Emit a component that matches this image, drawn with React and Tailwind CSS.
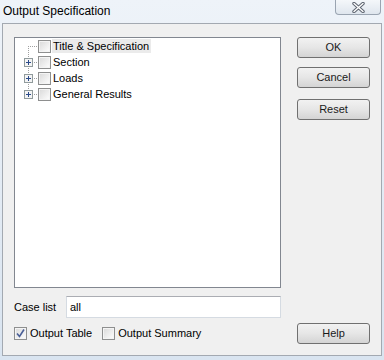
import React from 'react'

const font = { fontFamily: '"Liberation Sans", Arial, sans-serif' }

const Box = ({ checked }) => (
  <span className="flex h-[13px] w-[13px] shrink-0 items-center justify-center border border-[#8e8f8f] bg-white">
    <span className="flex h-[11px] w-[11px] items-center justify-center border border-[#f4f4f4] bg-gradient-to-br from-[#dcdcdc] to-[#fbfbfb]">
      {checked && (
        <svg width="9" height="9" viewBox="0 0 9 9">
          <path d="M1 4.5 L3.5 7.5 L8 0.5" fill="none" stroke="#4a5f97" strokeWidth="1.6" />
        </svg>
      )}
    </span>
  </span>
)

// tree connector: vertical dotted line, horizontal stub, optional plus box
const Connector = ({ top, bottom, plus }) => (
  <svg width="23" height="16" viewBox="0 0 23 16" className="shrink-0">
    {top && <line x1="13.5" y1="0" x2="13.5" y2="8" stroke="#a0a0a0" strokeDasharray="1 1" />}
    {bottom && <line x1="13.5" y1="8" x2="13.5" y2="16" stroke="#a0a0a0" strokeDasharray="1 1" />}
    <line x1="13" y1="8.5" x2="23" y2="8.5" stroke="#a0a0a0" strokeDasharray="1 1" />
    {plus && (
      <g>
        <rect x="9.5" y="4.5" width="8" height="8" fill="#f4f4f4" stroke="#919b9c" />
        <line x1="11" y1="8.5" x2="16" y2="8.5" stroke="#2b4b8a" />
        <line x1="13.5" y1="6" x2="13.5" y2="11" stroke="#2b4b8a" />
      </g>
    )}
  </svg>
)

const rows = [
  { label: 'Title & Specification', top: false, bottom: true, plus: false, sel: true },
  { label: 'Section', top: true, bottom: true, plus: true },
  { label: 'Loads', top: true, bottom: true, plus: true },
  { label: 'General Results', top: true, bottom: false, plus: true },
]

const Button = ({ children }) => (
  <button className="flex h-[21px] w-[73px] items-center justify-center rounded-[3px] border border-[#707070] bg-gradient-to-b from-[#f2f2f2] via-[#e6e6e6] to-[#d4d4d4] text-[11px] text-[#1a1a1a]">
    {children}
  </button>
)

export default function App() {
  return (
    <div className="flex h-[360px] w-[384px] flex-col bg-gradient-to-b from-[#eef3f9] to-[#d9e4f0]" style={font}>
      <div className="flex h-[23px] shrink-0 items-start justify-between">
        <span className="pl-[3px] pt-[2px] text-[12px] text-black">Output Specification</span>
        <span className="mr-[3px] flex h-[15px] w-[46px] items-center justify-center rounded-b-[4px] border border-t-0 border-[#9aa4b1] bg-gradient-to-b from-[#f4f7fa] to-[#dfe6ee]">
          <svg width="13" height="11" viewBox="0 0 13 11">
            <path d="M2 1.5 L11 9.5 M11 1.5 L2 9.5" stroke="#5d6470" strokeWidth="3.4" strokeLinecap="round" />
            <path d="M2 1.5 L11 9.5 M11 1.5 L2 9.5" stroke="#ffffff" strokeWidth="1.4" strokeLinecap="round" />
          </svg>
        </span>
      </div>
      <div className="mx-[2px] flex h-[333px] border border-[#a3a9b1] bg-[#f0f0f0] pl-[11px] pt-[13px]">
        <div className="flex w-[267px] flex-col">
          <div className="h-[251px] border border-[#828790] bg-white">
            {rows.map((r) => (
              <div key={r.label} className="flex h-[16px] items-center">
                <Connector top={r.top} bottom={r.bottom} plus={r.plus} />
                <Box />
                <span className={`ml-[1px] flex h-[14px] items-center pl-[1px] pr-[2px] text-[11px] text-black ${r.sel ? 'bg-[#ebebeb]' : ''}`}>
                  {r.label}
                </span>
              </div>
            ))}
          </div>
          <div className="mt-[8px] flex h-[22px] items-center">
            <span className="w-[52px] text-[11px] text-black">Case list</span>
            <div className="flex h-[22px] flex-1 items-center border border-[#d5dbe2] border-t-[#abadb3] bg-white pl-[3px] text-[11px] text-black">
              all
            </div>
          </div>
          <div className="mt-[7px] flex items-center">
            <Box checked />
            <span className="ml-[3px] text-[11px] text-black">Output Table</span>
            <span className="ml-[10px] flex items-center">
              <Box />
              <span className="ml-[3px] text-[11px] text-black">Output Summary</span>
            </span>
          </div>
        </div>
        <div className="ml-[16px] flex flex-col pb-[11px]">
          <Button>OK</Button>
          <div className="mt-[9px]"><Button>Cancel</Button></div>
          <div className="mt-[11px]"><Button>Reset</Button></div>
          <div className="mt-auto"><Button>Help</Button></div>
        </div>
      </div>
    </div>
  )
}
